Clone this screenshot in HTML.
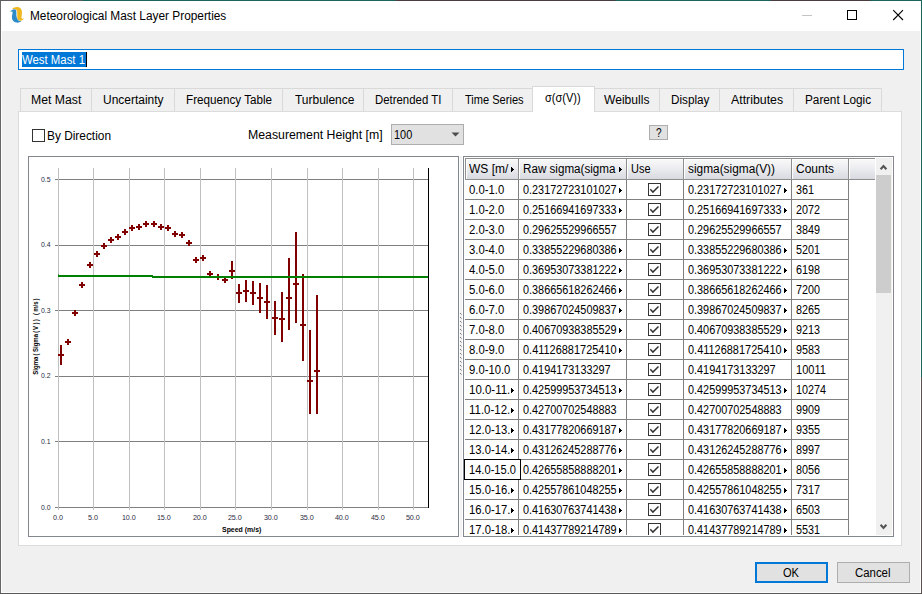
<!DOCTYPE html>
<html><head><meta charset="utf-8"><title>Meteorological Mast Layer Properties</title>
<style>
html,body{margin:0;padding:0;}
body{width:922px;height:594px;overflow:hidden;position:relative;background:#f0f0f0;font-family:"Liberation Sans",sans-serif;font-size:12px;}
div,span,svg{position:absolute;box-sizing:border-box;}
.t{white-space:nowrap;transform-origin:0 50%;}
.tab{top:88px;height:23px;border:1px solid #d9d9d9;border-bottom:none;background:#f0f0f0;}
.hc{top:158px;height:22px;border:1px solid #8e8e8e;border-left:none;background:linear-gradient(#f9f9f9,#ecedf0 45%,#d7dae0);box-shadow:inset 1px 1px 0 #fff;}
.btn{background:#e1e1e1;border:1px solid #adadad;}
.hl{height:1px;background:#808080;}
.vl{width:1px;background:#808080;}
</style></head><body>

<div style="left:0;top:0;width:922px;height:1px;background:linear-gradient(90deg,#5c5c5c 0,#5c5c5c 82px,#1a645e 83px,#1a645e 395px,#4a3d40 396px,#4a3d40 615px,#1a645e 616px,#1a645e 770px,#4a3d40 771px,#4a3d40 870px,#1a645e 871px,#1a645e 100%);"></div>
<div style="left:0;top:1px;width:1px;height:593px;background:#666;"></div>
<div style="left:921px;top:0;width:1px;height:594px;background:linear-gradient(180deg,#1a645e 0,#1a645e 377px,#5e504e 378px,#5e504e 100%);"></div>
<div style="left:0;top:593px;width:922px;height:1px;background:#585858;"></div>
<div style="left:1px;top:1px;width:1px;height:592px;background:#fcfcfc;"></div>
<div style="left:920px;top:1px;width:1px;height:592px;background:#fcfcfc;"></div>
<div style="left:1px;top:592px;width:920px;height:1px;background:#fcfcfc;"></div>
<div style="left:1px;top:1px;width:920px;height:30px;background:#fff;"></div>
<svg style="left:4px;top:2px;width:30px;height:26px;" viewBox="0 0 685 594">
<path d="M185,160 C220,120 290,105 350,125 C400,150 415,200 410,260 C405,310 390,350 405,375 C420,390 440,385 455,368 C452,400 420,432 370,430 C330,425 305,390 300,340 C295,290 310,230 290,190 C270,160 220,160 185,160 Z" fill="#f0b81f"/>
<path d="M132,218 C170,190 200,165 240,165 C275,170 290,200 285,260 C280,320 290,380 330,420 C360,440 390,435 405,430 C380,462 330,478 280,470 C220,460 180,420 180,350 C180,300 200,260 195,228 C190,212 160,218 132,218 Z" fill="#2e8bc9"/>
<path d="M290,200 C300,240 286,290 298,340" stroke="#fff" stroke-width="9" fill="none" opacity="0.75"/>
</svg>
<span class="t" style="left:30.40px;top:7.84px;font-size:12px;line-height:16px;color:#000;transform:scaleX(0.9876);">Meteorological Mast Layer Properties</span>
<div style="left:802px;top:15px;width:10px;height:1px;background:#c4c4c4;"></div>
<div style="left:847px;top:10px;width:10px;height:10px;border:1px solid #000;"></div>
<svg style="left:892px;top:9px;width:13px;height:13px;" viewBox="0 0 13 13"><path d="M1.2,1.2 L11,11 M11,1.2 L1.2,11" stroke="#000" stroke-width="1.1" fill="none"/></svg>
<div style="left:18px;top:49px;width:886px;height:21px;background:#fff;border:1px solid #0078d7;"></div>
<div style="left:22px;top:52px;width:64px;height:15px;background:#0078d7;"></div>
<div style="left:86px;top:52px;width:1px;height:15px;background:#000;"></div>
<span class="t" style="left:22.30px;top:52.44px;font-size:12px;line-height:16px;color:#fff;transform:scaleX(0.9479);">West Mast 1</span>
<div style="left:18px;top:111px;width:884px;height:435px;background:#fff;border:1px solid #dcdcdc;"></div>
<div class="tab" style="left:20px;width:72px;"></div>
<span class="t" style="left:31.30px;top:91.84px;font-size:12px;line-height:16px;color:#000;transform:scaleX(1.0194);">Met Mast</span>
<div class="tab" style="left:91px;width:84px;"></div>
<span class="t" style="left:103.40px;top:91.84px;font-size:12px;line-height:16px;color:#000;transform:scaleX(0.9985);">Uncertainty</span>
<div class="tab" style="left:174px;width:109px;"></div>
<span class="t" style="left:186.30px;top:91.84px;font-size:12px;line-height:16px;color:#000;transform:scaleX(0.9729);">Frequency Table</span>
<div class="tab" style="left:282px;width:82px;"></div>
<span class="t" style="left:294.50px;top:91.84px;font-size:12px;line-height:16px;color:#000;transform:scaleX(0.9968);">Turbulence</span>
<div class="tab" style="left:363px;width:90px;"></div>
<span class="t" style="left:375.30px;top:91.84px;font-size:12px;line-height:16px;color:#000;transform:scaleX(0.9496);">Detrended TI</span>
<div class="tab" style="left:452px;width:83px;"></div>
<span class="t" style="left:464.60px;top:91.84px;font-size:12px;line-height:16px;color:#000;transform:scaleX(0.9218);">Time Series</span>
<div class="tab" style="left:592px;width:68px;"></div>
<span class="t" style="left:604.10px;top:91.84px;font-size:12px;line-height:16px;color:#000;transform:scaleX(1.0082);">Weibulls</span>
<div class="tab" style="left:659px;width:61px;"></div>
<span class="t" style="left:671.20px;top:91.84px;font-size:12px;line-height:16px;color:#000;transform:scaleX(0.9760);">Display</span>
<div class="tab" style="left:719px;width:75px;"></div>
<span class="t" style="left:731.00px;top:91.84px;font-size:12px;line-height:16px;color:#000;transform:scaleX(1.0278);">Attributes</span>
<div class="tab" style="left:793px;width:89px;"></div>
<span class="t" style="left:805.30px;top:91.84px;font-size:12px;line-height:16px;color:#000;transform:scaleX(0.9810);">Parent Logic</span>
<div style="left:532px;top:86px;width:63px;height:26px;border:1px solid #d9d9d9;border-bottom:none;background:#fff;"></div>
<span class="t" style="left:544.90px;top:90.34px;font-size:12px;line-height:16px;color:#000;transform:scaleX(0.9175);">σ(σ(V))</span>
<div style="left:32px;top:129px;width:13px;height:13px;background:#fff;border:1px solid #333;"></div>
<span class="t" style="left:46.70px;top:128.44px;font-size:12px;line-height:16px;color:#000;transform:scaleX(0.9894);">By Direction</span>
<span class="t" style="left:247.70px;top:126.64px;font-size:12px;line-height:16px;color:#000;transform:scaleX(1.0245);">Measurement Height [m]</span>
<div class="btn" style="left:391px;top:124px;width:73px;height:21px;"></div>
<span class="t" style="left:394.40px;top:126.64px;font-size:12px;line-height:16px;color:#000;transform:scaleX(0.9090);">100</span>
<svg style="left:451px;top:132px;width:9px;height:5px;" viewBox="0 0 9 5"><path d="M0.5,0.5 L8.5,0.5 L4.5,4.5 Z" fill="#4d4d4d"/></svg>
<div class="btn" style="left:649px;top:125px;width:19px;height:15px;"></div>
<span class="t" style="left:655.80px;top:124.84px;font-size:12px;line-height:16px;color:#000;transform:scaleX(0.8391);">?</span><div style="left:28px;top:156px;width:431px;height:381px;background:#fff;border:1px solid #828790;"></div>
<div style="left:460px;top:156px;width:2px;height:381px;background:#f3f3f3;"></div>
<svg style="left:460px;top:313px;width:2px;height:64px;" viewBox="0 0 2 64" shape-rendering="crispEdges"><rect x="0" y="0" width="1" height="1" fill="#777"/><rect x="1" y="1" width="1" height="1" fill="#aaa"/><rect x="0" y="4" width="1" height="1" fill="#777"/><rect x="1" y="5" width="1" height="1" fill="#aaa"/><rect x="0" y="8" width="1" height="1" fill="#777"/><rect x="1" y="9" width="1" height="1" fill="#aaa"/><rect x="0" y="12" width="1" height="1" fill="#777"/><rect x="1" y="13" width="1" height="1" fill="#aaa"/><rect x="0" y="16" width="1" height="1" fill="#777"/><rect x="1" y="17" width="1" height="1" fill="#aaa"/><rect x="0" y="20" width="1" height="1" fill="#777"/><rect x="1" y="21" width="1" height="1" fill="#aaa"/><rect x="0" y="24" width="1" height="1" fill="#777"/><rect x="1" y="25" width="1" height="1" fill="#aaa"/><rect x="0" y="28" width="1" height="1" fill="#777"/><rect x="1" y="29" width="1" height="1" fill="#aaa"/><rect x="0" y="32" width="1" height="1" fill="#777"/><rect x="1" y="33" width="1" height="1" fill="#aaa"/><rect x="0" y="36" width="1" height="1" fill="#777"/><rect x="1" y="37" width="1" height="1" fill="#aaa"/><rect x="0" y="40" width="1" height="1" fill="#777"/><rect x="1" y="41" width="1" height="1" fill="#aaa"/><rect x="0" y="44" width="1" height="1" fill="#777"/><rect x="1" y="45" width="1" height="1" fill="#aaa"/><rect x="0" y="48" width="1" height="1" fill="#777"/><rect x="1" y="49" width="1" height="1" fill="#aaa"/><rect x="0" y="52" width="1" height="1" fill="#777"/><rect x="1" y="53" width="1" height="1" fill="#aaa"/><rect x="0" y="56" width="1" height="1" fill="#777"/><rect x="1" y="57" width="1" height="1" fill="#aaa"/><rect x="0" y="60" width="1" height="1" fill="#777"/><rect x="1" y="61" width="1" height="1" fill="#aaa"/></svg>
<svg style="left:0;top:0;width:470px;height:540px;" viewBox="0 0 470 540">
<g shape-rendering="crispEdges">
<rect x="55" y="507" width="374" height="1" fill="#7f7f7f"/>
<rect x="55" y="441" width="374" height="1" fill="#7f7f7f"/>
<rect x="55" y="376" width="374" height="1" fill="#7f7f7f"/>
<rect x="55" y="310" width="374" height="1" fill="#7f7f7f"/>
<rect x="55" y="245" width="374" height="1" fill="#7f7f7f"/>
<rect x="55" y="179" width="374" height="1" fill="#7f7f7f"/>
<rect x="58" y="168" width="1" height="342" fill="#c0c0c0"/>
<rect x="93" y="168" width="1" height="342" fill="#c0c0c0"/>
<rect x="129" y="168" width="1" height="342" fill="#c0c0c0"/>
<rect x="164" y="168" width="1" height="342" fill="#c0c0c0"/>
<rect x="200" y="168" width="1" height="342" fill="#c0c0c0"/>
<rect x="235" y="168" width="1" height="342" fill="#c0c0c0"/>
<rect x="271" y="168" width="1" height="342" fill="#c0c0c0"/>
<rect x="307" y="168" width="1" height="342" fill="#c0c0c0"/>
<rect x="342" y="168" width="1" height="342" fill="#c0c0c0"/>
<rect x="378" y="168" width="1" height="342" fill="#c0c0c0"/>
<rect x="413" y="168" width="1" height="342" fill="#c0c0c0"/>
<rect x="428" y="168" width="1" height="340" fill="#000"/>
</g>
<g shape-rendering="crispEdges">
<rect x="60" y="345" width="2" height="20" fill="#800000"/>
<rect x="58" y="354" width="6" height="2" fill="#800000"/>
<rect x="67" y="339" width="2" height="6" fill="#800000"/>
<rect x="65" y="341" width="6" height="2" fill="#800000"/>
<rect x="74" y="310" width="2" height="6" fill="#800000"/>
<rect x="72" y="312" width="6" height="2" fill="#800000"/>
<rect x="81" y="282" width="2" height="6" fill="#800000"/>
<rect x="79" y="284" width="6" height="2" fill="#800000"/>
<rect x="89" y="262" width="2" height="6" fill="#800000"/>
<rect x="87" y="264" width="6" height="2" fill="#800000"/>
<rect x="96" y="251" width="2" height="6" fill="#800000"/>
<rect x="94" y="253" width="6" height="2" fill="#800000"/>
<rect x="103" y="243" width="2" height="6" fill="#800000"/>
<rect x="101" y="245" width="6" height="2" fill="#800000"/>
<rect x="110" y="237" width="2" height="6" fill="#800000"/>
<rect x="108" y="239" width="6" height="2" fill="#800000"/>
<rect x="117" y="234" width="2" height="6" fill="#800000"/>
<rect x="115" y="236" width="6" height="2" fill="#800000"/>
<rect x="124" y="229" width="2" height="6" fill="#800000"/>
<rect x="122" y="231" width="6" height="2" fill="#800000"/>
<rect x="131" y="225" width="2" height="6" fill="#800000"/>
<rect x="129" y="227" width="6" height="2" fill="#800000"/>
<rect x="138" y="224" width="2" height="6" fill="#800000"/>
<rect x="136" y="226" width="6" height="2" fill="#800000"/>
<rect x="145" y="221" width="2" height="6" fill="#800000"/>
<rect x="143" y="223" width="6" height="2" fill="#800000"/>
<rect x="153" y="221" width="2" height="6" fill="#800000"/>
<rect x="151" y="223" width="6" height="2" fill="#800000"/>
<rect x="160" y="224" width="2" height="6" fill="#800000"/>
<rect x="158" y="226" width="6" height="2" fill="#800000"/>
<rect x="167" y="225" width="2" height="6" fill="#800000"/>
<rect x="165" y="227" width="6" height="2" fill="#800000"/>
<rect x="174" y="231" width="2" height="6" fill="#800000"/>
<rect x="172" y="233" width="6" height="2" fill="#800000"/>
<rect x="181" y="232" width="2" height="6" fill="#800000"/>
<rect x="179" y="234" width="6" height="2" fill="#800000"/>
<rect x="188" y="240" width="2" height="6" fill="#800000"/>
<rect x="186" y="242" width="6" height="2" fill="#800000"/>
<rect x="195" y="257" width="2" height="6" fill="#800000"/>
<rect x="193" y="259" width="6" height="2" fill="#800000"/>
<rect x="202" y="255" width="2" height="6" fill="#800000"/>
<rect x="200" y="257" width="6" height="2" fill="#800000"/>
<rect x="209" y="271" width="2" height="6" fill="#800000"/>
<rect x="207" y="273" width="6" height="2" fill="#800000"/>
<rect x="217" y="274" width="2" height="6" fill="#800000"/>
<rect x="215" y="276" width="6" height="2" fill="#800000"/>
<rect x="224" y="277" width="2" height="6" fill="#800000"/>
<rect x="222" y="279" width="6" height="2" fill="#800000"/>
<rect x="231" y="261" width="2" height="18" fill="#800000"/>
<rect x="229" y="270" width="6" height="2" fill="#800000"/>
<rect x="238" y="284" width="2" height="19" fill="#800000"/>
<rect x="236" y="292" width="6" height="2" fill="#800000"/>
<rect x="245" y="280" width="2" height="22" fill="#800000"/>
<rect x="243" y="290" width="6" height="2" fill="#800000"/>
<rect x="252" y="281" width="2" height="24" fill="#800000"/>
<rect x="250" y="292" width="6" height="2" fill="#800000"/>
<rect x="259" y="283" width="2" height="30" fill="#800000"/>
<rect x="257" y="297" width="6" height="2" fill="#800000"/>
<rect x="266" y="285" width="2" height="34" fill="#800000"/>
<rect x="264" y="301" width="6" height="2" fill="#800000"/>
<rect x="274" y="301" width="2" height="34" fill="#800000"/>
<rect x="272" y="317" width="6" height="2" fill="#800000"/>
<rect x="281" y="292" width="2" height="50" fill="#800000"/>
<rect x="279" y="318" width="6" height="2" fill="#800000"/>
<rect x="288" y="258" width="2" height="72" fill="#800000"/>
<rect x="286" y="297" width="6" height="2" fill="#800000"/>
<rect x="295" y="232" width="2" height="91" fill="#800000"/>
<rect x="293" y="283" width="6" height="2" fill="#800000"/>
<rect x="302" y="274" width="2" height="87" fill="#800000"/>
<rect x="300" y="324" width="6" height="2" fill="#800000"/>
<rect x="309" y="330" width="2" height="84" fill="#800000"/>
<rect x="307" y="380" width="6" height="2" fill="#800000"/>
<rect x="316" y="295" width="2" height="119" fill="#800000"/>
<rect x="314" y="370" width="6" height="2" fill="#800000"/>
</g>
<g shape-rendering="crispEdges"><rect x="58" y="275" width="95" height="2" fill="#008000"/><rect x="152" y="276" width="276" height="2" fill="#008000"/><rect x="58" y="274" width="1" height="1" fill="#008000" opacity="0.6"/></g>
</svg>
<span class="t" style="left:40.80px;top:499.51px;font-size:7.2px;line-height:16px;color:#2a2a40;transform:scaleX(0.9591);">0.0</span>
<span class="t" style="left:40.80px;top:433.91px;font-size:7.2px;line-height:16px;color:#2a2a40;transform:scaleX(0.9591);">0.1</span>
<span class="t" style="left:40.80px;top:368.31px;font-size:7.2px;line-height:16px;color:#2a2a40;transform:scaleX(0.9591);">0.2</span>
<span class="t" style="left:40.80px;top:302.71px;font-size:7.2px;line-height:16px;color:#2a2a40;transform:scaleX(0.9591);">0.3</span>
<span class="t" style="left:40.80px;top:237.11px;font-size:7.2px;line-height:16px;color:#2a2a40;transform:scaleX(0.9591);">0.4</span>
<span class="t" style="left:40.80px;top:171.51px;font-size:7.2px;line-height:16px;color:#2a2a40;transform:scaleX(0.9591);">0.5</span>
<span class="t" style="left:52.90px;top:509.81px;font-size:7.2px;line-height:16px;color:#2a2a40;">0.0</span>
<span class="t" style="left:87.90px;top:509.81px;font-size:7.2px;line-height:16px;color:#2a2a40;">5.0</span>
<span class="t" style="left:121.89px;top:509.81px;font-size:7.2px;line-height:16px;color:#2a2a40;">10.0</span>
<span class="t" style="left:156.89px;top:509.81px;font-size:7.2px;line-height:16px;color:#2a2a40;">15.0</span>
<span class="t" style="left:192.89px;top:509.81px;font-size:7.2px;line-height:16px;color:#2a2a40;">20.0</span>
<span class="t" style="left:227.89px;top:509.81px;font-size:7.2px;line-height:16px;color:#2a2a40;">25.0</span>
<span class="t" style="left:263.89px;top:509.81px;font-size:7.2px;line-height:16px;color:#2a2a40;">30.0</span>
<span class="t" style="left:299.89px;top:509.81px;font-size:7.2px;line-height:16px;color:#2a2a40;">35.0</span>
<span class="t" style="left:334.89px;top:509.81px;font-size:7.2px;line-height:16px;color:#2a2a40;">40.0</span>
<span class="t" style="left:370.89px;top:509.81px;font-size:7.2px;line-height:16px;color:#2a2a40;">45.0</span>
<span class="t" style="left:405.89px;top:509.81px;font-size:7.2px;line-height:16px;color:#2a2a40;">50.0</span>
<span class="t" style="left:222.40px;top:521.91px;font-size:7.2px;line-height:16px;color:#000;font-weight:bold;transform:scaleX(0.9655);">Speed (m/s)</span>
<span class="t" style="left:0;top:0;font-size:6.9px;line-height:8px;height:8px;font-weight:bold;color:#000;transform-origin:0 0;transform:translate(32.0px,374.7px) rotate(-90deg) scale(0.87,1);"><span style="position:static;display:inline-block;margin:0 0px 0 0px;">Sigma</span><span style="position:static;display:inline-block;margin:0 1.6px 0 1.5px;">(</span><span style="position:static;display:inline-block;margin:0 0px 0 0px;">Sigma</span><span style="position:static;display:inline-block;margin:0 0.8px 0 1.6px;">(</span><span style="position:static;display:inline-block;margin:0 0px 0 0px;">V</span><span style="position:static;display:inline-block;margin:0 0px 0 1.6px;">)</span><span style="position:static;display:inline-block;margin:0 0px 0 1.6px;">)</span><span style="position:static;display:inline-block;margin:0 1.3px 0 4.8px;">(</span><span style="position:static;display:inline-block;margin:0 0px 0 0px;">m/s</span><span style="position:static;display:inline-block;margin:0 0px 0 1.3px;">)</span></span><div style="left:463px;top:156px;width:431px;height:381px;background:#fff;border:1px solid #828790;"></div>
<div class="hc" style="left:465px;width:54px;border-left:1px solid #8e8e8e;"></div>
<div class="hc" style="left:519px;width:108px;"></div>
<div class="hc" style="left:627px;width:57px;"></div>
<div class="hc" style="left:684px;width:108px;"></div>
<div class="hc" style="left:792px;width:57px;"></div>
<div class="hc" style="left:849px;width:26px;border-right:none;"></div>
<span class="t" style="left:468.90px;top:160.84px;font-size:12px;line-height:16px;color:#000;transform:scaleX(0.9993);">WS [m/</span>
<svg style="left:511px;top:167px;width:3px;height:5px;" viewBox="0 0 3 5" shape-rendering="crispEdges"><rect x="0" y="0" width="1" height="5" fill="#000"/><rect x="1" y="1" width="1" height="3" fill="#000"/><rect x="2" y="2" width="1" height="1" fill="#000"/></svg>
<span class="t" style="left:522.60px;top:160.84px;font-size:12px;line-height:16px;color:#000;transform:scaleX(0.9700);">Raw sigma(sigma</span>
<svg style="left:619px;top:167px;width:3px;height:5px;" viewBox="0 0 3 5" shape-rendering="crispEdges"><rect x="0" y="0" width="1" height="5" fill="#000"/><rect x="1" y="1" width="1" height="3" fill="#000"/><rect x="2" y="2" width="1" height="1" fill="#000"/></svg>
<span class="t" style="left:630.60px;top:160.84px;font-size:12px;line-height:16px;color:#000;transform:scaleX(0.9138);">Use</span>
<span class="t" style="left:688.20px;top:160.84px;font-size:12px;line-height:16px;color:#000;transform:scaleX(0.9885);">sigma(sigma(V))</span>
<span class="t" style="left:795.50px;top:160.84px;font-size:12px;line-height:16px;color:#000;transform:scaleX(0.9994);">Counts</span>
<div style="left:464px;top:180px;width:412px;height:355px;overflow:hidden;">
<div class="vl" style="left:54px;top:0;height:360px;"></div>
<div class="vl" style="left:162px;top:0;height:360px;"></div>
<div class="vl" style="left:219px;top:0;height:360px;"></div>
<div class="vl" style="left:327px;top:0;height:360px;"></div>
<div class="vl" style="left:384px;top:0;height:360px;"></div>
<div class="hl" style="left:1px;top:19px;width:384px;"></div>
<span class="t" style="left:4.50px;top:1.84px;font-size:12px;line-height:16px;color:#000;transform:scaleX(0.9449);">0.0-1.0</span>
<span class="t" style="left:59.40px;top:1.84px;font-size:12px;line-height:16px;color:#000;transform:scaleX(0.9049);">0.23172723101027</span>
<svg style="left:155px;top:8px;width:3px;height:5px;" viewBox="0 0 3 5" shape-rendering="crispEdges"><rect x="0" y="0" width="1" height="5" fill="#000"/><rect x="1" y="1" width="1" height="3" fill="#000"/><rect x="2" y="2" width="1" height="1" fill="#000"/></svg>
<span class="t" style="left:224.40px;top:1.84px;font-size:12px;line-height:16px;color:#000;transform:scaleX(0.9049);">0.23172723101027</span>
<svg style="left:320px;top:8px;width:3px;height:5px;" viewBox="0 0 3 5" shape-rendering="crispEdges"><rect x="0" y="0" width="1" height="5" fill="#000"/><rect x="1" y="1" width="1" height="3" fill="#000"/><rect x="2" y="2" width="1" height="1" fill="#000"/></svg>
<span class="t" style="left:331.50px;top:1.84px;font-size:12px;line-height:16px;color:#000;transform:scaleX(0.8990);">361</span>
<div style="left:184px;top:3px;width:13px;height:13px;border:1px solid #333;background:#fff;"></div>
<svg style="left:184px;top:3px;width:13px;height:13px;" viewBox="0 0 13 13"><path d="M2.3,6.3 L4.9,9.1 L10.5,3.5" stroke="#333" stroke-width="1.45" fill="none"/></svg>
<div class="hl" style="left:1px;top:39px;width:384px;"></div>
<span class="t" style="left:4.50px;top:21.84px;font-size:12px;line-height:16px;color:#000;transform:scaleX(0.9449);">1.0-2.0</span>
<span class="t" style="left:59.40px;top:21.84px;font-size:12px;line-height:16px;color:#000;transform:scaleX(0.9049);">0.25166941697333</span>
<svg style="left:155px;top:28px;width:3px;height:5px;" viewBox="0 0 3 5" shape-rendering="crispEdges"><rect x="0" y="0" width="1" height="5" fill="#000"/><rect x="1" y="1" width="1" height="3" fill="#000"/><rect x="2" y="2" width="1" height="1" fill="#000"/></svg>
<span class="t" style="left:224.40px;top:21.84px;font-size:12px;line-height:16px;color:#000;transform:scaleX(0.9049);">0.25166941697333</span>
<svg style="left:320px;top:28px;width:3px;height:5px;" viewBox="0 0 3 5" shape-rendering="crispEdges"><rect x="0" y="0" width="1" height="5" fill="#000"/><rect x="1" y="1" width="1" height="3" fill="#000"/><rect x="2" y="2" width="1" height="1" fill="#000"/></svg>
<span class="t" style="left:331.50px;top:21.84px;font-size:12px;line-height:16px;color:#000;transform:scaleX(0.8990);">2072</span>
<div style="left:184px;top:23px;width:13px;height:13px;border:1px solid #333;background:#fff;"></div>
<svg style="left:184px;top:23px;width:13px;height:13px;" viewBox="0 0 13 13"><path d="M2.3,6.3 L4.9,9.1 L10.5,3.5" stroke="#333" stroke-width="1.45" fill="none"/></svg>
<div class="hl" style="left:1px;top:59px;width:384px;"></div>
<span class="t" style="left:4.50px;top:41.84px;font-size:12px;line-height:16px;color:#000;transform:scaleX(0.9449);">2.0-3.0</span>
<span class="t" style="left:59.40px;top:41.84px;font-size:12px;line-height:16px;color:#000;transform:scaleX(0.9049);">0.29625529966557</span>
<span class="t" style="left:224.40px;top:41.84px;font-size:12px;line-height:16px;color:#000;transform:scaleX(0.9049);">0.29625529966557</span>
<span class="t" style="left:331.50px;top:41.84px;font-size:12px;line-height:16px;color:#000;transform:scaleX(0.8990);">3849</span>
<div style="left:184px;top:43px;width:13px;height:13px;border:1px solid #333;background:#fff;"></div>
<svg style="left:184px;top:43px;width:13px;height:13px;" viewBox="0 0 13 13"><path d="M2.3,6.3 L4.9,9.1 L10.5,3.5" stroke="#333" stroke-width="1.45" fill="none"/></svg>
<div class="hl" style="left:1px;top:79px;width:384px;"></div>
<span class="t" style="left:4.50px;top:61.84px;font-size:12px;line-height:16px;color:#000;transform:scaleX(0.9449);">3.0-4.0</span>
<span class="t" style="left:59.40px;top:61.84px;font-size:12px;line-height:16px;color:#000;transform:scaleX(0.9049);">0.33855229680386</span>
<svg style="left:155px;top:68px;width:3px;height:5px;" viewBox="0 0 3 5" shape-rendering="crispEdges"><rect x="0" y="0" width="1" height="5" fill="#000"/><rect x="1" y="1" width="1" height="3" fill="#000"/><rect x="2" y="2" width="1" height="1" fill="#000"/></svg>
<span class="t" style="left:224.40px;top:61.84px;font-size:12px;line-height:16px;color:#000;transform:scaleX(0.9049);">0.33855229680386</span>
<svg style="left:320px;top:68px;width:3px;height:5px;" viewBox="0 0 3 5" shape-rendering="crispEdges"><rect x="0" y="0" width="1" height="5" fill="#000"/><rect x="1" y="1" width="1" height="3" fill="#000"/><rect x="2" y="2" width="1" height="1" fill="#000"/></svg>
<span class="t" style="left:331.50px;top:61.84px;font-size:12px;line-height:16px;color:#000;transform:scaleX(0.8990);">5201</span>
<div style="left:184px;top:63px;width:13px;height:13px;border:1px solid #333;background:#fff;"></div>
<svg style="left:184px;top:63px;width:13px;height:13px;" viewBox="0 0 13 13"><path d="M2.3,6.3 L4.9,9.1 L10.5,3.5" stroke="#333" stroke-width="1.45" fill="none"/></svg>
<div class="hl" style="left:1px;top:99px;width:384px;"></div>
<span class="t" style="left:4.50px;top:81.84px;font-size:12px;line-height:16px;color:#000;transform:scaleX(0.9449);">4.0-5.0</span>
<span class="t" style="left:59.40px;top:81.84px;font-size:12px;line-height:16px;color:#000;transform:scaleX(0.9049);">0.36953073381222</span>
<svg style="left:155px;top:88px;width:3px;height:5px;" viewBox="0 0 3 5" shape-rendering="crispEdges"><rect x="0" y="0" width="1" height="5" fill="#000"/><rect x="1" y="1" width="1" height="3" fill="#000"/><rect x="2" y="2" width="1" height="1" fill="#000"/></svg>
<span class="t" style="left:224.40px;top:81.84px;font-size:12px;line-height:16px;color:#000;transform:scaleX(0.9049);">0.36953073381222</span>
<svg style="left:320px;top:88px;width:3px;height:5px;" viewBox="0 0 3 5" shape-rendering="crispEdges"><rect x="0" y="0" width="1" height="5" fill="#000"/><rect x="1" y="1" width="1" height="3" fill="#000"/><rect x="2" y="2" width="1" height="1" fill="#000"/></svg>
<span class="t" style="left:331.50px;top:81.84px;font-size:12px;line-height:16px;color:#000;transform:scaleX(0.8990);">6198</span>
<div style="left:184px;top:83px;width:13px;height:13px;border:1px solid #333;background:#fff;"></div>
<svg style="left:184px;top:83px;width:13px;height:13px;" viewBox="0 0 13 13"><path d="M2.3,6.3 L4.9,9.1 L10.5,3.5" stroke="#333" stroke-width="1.45" fill="none"/></svg>
<div class="hl" style="left:1px;top:119px;width:384px;"></div>
<span class="t" style="left:4.50px;top:101.84px;font-size:12px;line-height:16px;color:#000;transform:scaleX(0.9449);">5.0-6.0</span>
<span class="t" style="left:59.40px;top:101.84px;font-size:12px;line-height:16px;color:#000;transform:scaleX(0.9049);">0.38665618262466</span>
<svg style="left:155px;top:108px;width:3px;height:5px;" viewBox="0 0 3 5" shape-rendering="crispEdges"><rect x="0" y="0" width="1" height="5" fill="#000"/><rect x="1" y="1" width="1" height="3" fill="#000"/><rect x="2" y="2" width="1" height="1" fill="#000"/></svg>
<span class="t" style="left:224.40px;top:101.84px;font-size:12px;line-height:16px;color:#000;transform:scaleX(0.9049);">0.38665618262466</span>
<svg style="left:320px;top:108px;width:3px;height:5px;" viewBox="0 0 3 5" shape-rendering="crispEdges"><rect x="0" y="0" width="1" height="5" fill="#000"/><rect x="1" y="1" width="1" height="3" fill="#000"/><rect x="2" y="2" width="1" height="1" fill="#000"/></svg>
<span class="t" style="left:331.50px;top:101.84px;font-size:12px;line-height:16px;color:#000;transform:scaleX(0.8990);">7200</span>
<div style="left:184px;top:103px;width:13px;height:13px;border:1px solid #333;background:#fff;"></div>
<svg style="left:184px;top:103px;width:13px;height:13px;" viewBox="0 0 13 13"><path d="M2.3,6.3 L4.9,9.1 L10.5,3.5" stroke="#333" stroke-width="1.45" fill="none"/></svg>
<div class="hl" style="left:1px;top:139px;width:384px;"></div>
<span class="t" style="left:4.50px;top:121.84px;font-size:12px;line-height:16px;color:#000;transform:scaleX(0.9449);">6.0-7.0</span>
<span class="t" style="left:59.40px;top:121.84px;font-size:12px;line-height:16px;color:#000;transform:scaleX(0.9049);">0.39867024509837</span>
<svg style="left:155px;top:128px;width:3px;height:5px;" viewBox="0 0 3 5" shape-rendering="crispEdges"><rect x="0" y="0" width="1" height="5" fill="#000"/><rect x="1" y="1" width="1" height="3" fill="#000"/><rect x="2" y="2" width="1" height="1" fill="#000"/></svg>
<span class="t" style="left:224.40px;top:121.84px;font-size:12px;line-height:16px;color:#000;transform:scaleX(0.9049);">0.39867024509837</span>
<svg style="left:320px;top:128px;width:3px;height:5px;" viewBox="0 0 3 5" shape-rendering="crispEdges"><rect x="0" y="0" width="1" height="5" fill="#000"/><rect x="1" y="1" width="1" height="3" fill="#000"/><rect x="2" y="2" width="1" height="1" fill="#000"/></svg>
<span class="t" style="left:331.50px;top:121.84px;font-size:12px;line-height:16px;color:#000;transform:scaleX(0.8990);">8265</span>
<div style="left:184px;top:123px;width:13px;height:13px;border:1px solid #333;background:#fff;"></div>
<svg style="left:184px;top:123px;width:13px;height:13px;" viewBox="0 0 13 13"><path d="M2.3,6.3 L4.9,9.1 L10.5,3.5" stroke="#333" stroke-width="1.45" fill="none"/></svg>
<div class="hl" style="left:1px;top:159px;width:384px;"></div>
<span class="t" style="left:4.50px;top:141.84px;font-size:12px;line-height:16px;color:#000;transform:scaleX(0.9449);">7.0-8.0</span>
<span class="t" style="left:59.40px;top:141.84px;font-size:12px;line-height:16px;color:#000;transform:scaleX(0.9049);">0.40670938385529</span>
<svg style="left:155px;top:148px;width:3px;height:5px;" viewBox="0 0 3 5" shape-rendering="crispEdges"><rect x="0" y="0" width="1" height="5" fill="#000"/><rect x="1" y="1" width="1" height="3" fill="#000"/><rect x="2" y="2" width="1" height="1" fill="#000"/></svg>
<span class="t" style="left:224.40px;top:141.84px;font-size:12px;line-height:16px;color:#000;transform:scaleX(0.9049);">0.40670938385529</span>
<svg style="left:320px;top:148px;width:3px;height:5px;" viewBox="0 0 3 5" shape-rendering="crispEdges"><rect x="0" y="0" width="1" height="5" fill="#000"/><rect x="1" y="1" width="1" height="3" fill="#000"/><rect x="2" y="2" width="1" height="1" fill="#000"/></svg>
<span class="t" style="left:331.50px;top:141.84px;font-size:12px;line-height:16px;color:#000;transform:scaleX(0.8990);">9213</span>
<div style="left:184px;top:143px;width:13px;height:13px;border:1px solid #333;background:#fff;"></div>
<svg style="left:184px;top:143px;width:13px;height:13px;" viewBox="0 0 13 13"><path d="M2.3,6.3 L4.9,9.1 L10.5,3.5" stroke="#333" stroke-width="1.45" fill="none"/></svg>
<div class="hl" style="left:1px;top:179px;width:384px;"></div>
<span class="t" style="left:4.50px;top:161.84px;font-size:12px;line-height:16px;color:#000;transform:scaleX(0.9449);">8.0-9.0</span>
<span class="t" style="left:59.40px;top:161.84px;font-size:12px;line-height:16px;color:#000;transform:scaleX(0.9127);">0.41126881725410</span>
<svg style="left:155px;top:168px;width:3px;height:5px;" viewBox="0 0 3 5" shape-rendering="crispEdges"><rect x="0" y="0" width="1" height="5" fill="#000"/><rect x="1" y="1" width="1" height="3" fill="#000"/><rect x="2" y="2" width="1" height="1" fill="#000"/></svg>
<span class="t" style="left:224.40px;top:161.84px;font-size:12px;line-height:16px;color:#000;transform:scaleX(0.9127);">0.41126881725410</span>
<svg style="left:320px;top:168px;width:3px;height:5px;" viewBox="0 0 3 5" shape-rendering="crispEdges"><rect x="0" y="0" width="1" height="5" fill="#000"/><rect x="1" y="1" width="1" height="3" fill="#000"/><rect x="2" y="2" width="1" height="1" fill="#000"/></svg>
<span class="t" style="left:331.50px;top:161.84px;font-size:12px;line-height:16px;color:#000;transform:scaleX(0.8990);">9583</span>
<div style="left:184px;top:163px;width:13px;height:13px;border:1px solid #333;background:#fff;"></div>
<svg style="left:184px;top:163px;width:13px;height:13px;" viewBox="0 0 13 13"><path d="M2.3,6.3 L4.9,9.1 L10.5,3.5" stroke="#333" stroke-width="1.45" fill="none"/></svg>
<div class="hl" style="left:1px;top:199px;width:384px;"></div>
<span class="t" style="left:4.50px;top:181.84px;font-size:12px;line-height:16px;color:#000;transform:scaleX(0.9379);">9.0-10.0</span>
<span class="t" style="left:59.40px;top:181.84px;font-size:12px;line-height:16px;color:#000;transform:scaleX(0.9053);">0.4194173133297</span>
<span class="t" style="left:224.40px;top:181.84px;font-size:12px;line-height:16px;color:#000;transform:scaleX(0.9053);">0.4194173133297</span>
<span class="t" style="left:331.50px;top:181.84px;font-size:12px;line-height:16px;color:#000;transform:scaleX(0.9237);">10011</span>
<div style="left:184px;top:183px;width:13px;height:13px;border:1px solid #333;background:#fff;"></div>
<svg style="left:184px;top:183px;width:13px;height:13px;" viewBox="0 0 13 13"><path d="M2.3,6.3 L4.9,9.1 L10.5,3.5" stroke="#333" stroke-width="1.45" fill="none"/></svg>
<div class="hl" style="left:1px;top:219px;width:384px;"></div>
<span class="t" style="left:4.50px;top:201.84px;font-size:12px;line-height:16px;color:#000;transform:scaleX(0.9573);">10.0-11.</span>
<svg style="left:47px;top:208px;width:3px;height:5px;" viewBox="0 0 3 5" shape-rendering="crispEdges"><rect x="0" y="0" width="1" height="5" fill="#000"/><rect x="1" y="1" width="1" height="3" fill="#000"/><rect x="2" y="2" width="1" height="1" fill="#000"/></svg>
<span class="t" style="left:59.40px;top:201.84px;font-size:12px;line-height:16px;color:#000;transform:scaleX(0.9049);">0.42599953734513</span>
<svg style="left:155px;top:208px;width:3px;height:5px;" viewBox="0 0 3 5" shape-rendering="crispEdges"><rect x="0" y="0" width="1" height="5" fill="#000"/><rect x="1" y="1" width="1" height="3" fill="#000"/><rect x="2" y="2" width="1" height="1" fill="#000"/></svg>
<span class="t" style="left:224.40px;top:201.84px;font-size:12px;line-height:16px;color:#000;transform:scaleX(0.9049);">0.42599953734513</span>
<svg style="left:320px;top:208px;width:3px;height:5px;" viewBox="0 0 3 5" shape-rendering="crispEdges"><rect x="0" y="0" width="1" height="5" fill="#000"/><rect x="1" y="1" width="1" height="3" fill="#000"/><rect x="2" y="2" width="1" height="1" fill="#000"/></svg>
<span class="t" style="left:331.50px;top:201.84px;font-size:12px;line-height:16px;color:#000;transform:scaleX(0.8990);">10274</span>
<div style="left:184px;top:203px;width:13px;height:13px;border:1px solid #333;background:#fff;"></div>
<svg style="left:184px;top:203px;width:13px;height:13px;" viewBox="0 0 13 13"><path d="M2.3,6.3 L4.9,9.1 L10.5,3.5" stroke="#333" stroke-width="1.45" fill="none"/></svg>
<div class="hl" style="left:1px;top:239px;width:384px;"></div>
<span class="t" style="left:4.50px;top:221.84px;font-size:12px;line-height:16px;color:#000;transform:scaleX(0.9573);">11.0-12.</span>
<svg style="left:47px;top:228px;width:3px;height:5px;" viewBox="0 0 3 5" shape-rendering="crispEdges"><rect x="0" y="0" width="1" height="5" fill="#000"/><rect x="1" y="1" width="1" height="3" fill="#000"/><rect x="2" y="2" width="1" height="1" fill="#000"/></svg>
<span class="t" style="left:59.40px;top:221.84px;font-size:12px;line-height:16px;color:#000;transform:scaleX(0.9049);">0.42700702548883</span>
<span class="t" style="left:224.40px;top:221.84px;font-size:12px;line-height:16px;color:#000;transform:scaleX(0.9049);">0.42700702548883</span>
<span class="t" style="left:331.50px;top:221.84px;font-size:12px;line-height:16px;color:#000;transform:scaleX(0.8990);">9909</span>
<div style="left:184px;top:223px;width:13px;height:13px;border:1px solid #333;background:#fff;"></div>
<svg style="left:184px;top:223px;width:13px;height:13px;" viewBox="0 0 13 13"><path d="M2.3,6.3 L4.9,9.1 L10.5,3.5" stroke="#333" stroke-width="1.45" fill="none"/></svg>
<div class="hl" style="left:1px;top:259px;width:384px;"></div>
<span class="t" style="left:4.50px;top:241.84px;font-size:12px;line-height:16px;color:#000;transform:scaleX(0.9379);">12.0-13.</span>
<svg style="left:47px;top:248px;width:3px;height:5px;" viewBox="0 0 3 5" shape-rendering="crispEdges"><rect x="0" y="0" width="1" height="5" fill="#000"/><rect x="1" y="1" width="1" height="3" fill="#000"/><rect x="2" y="2" width="1" height="1" fill="#000"/></svg>
<span class="t" style="left:59.40px;top:241.84px;font-size:12px;line-height:16px;color:#000;transform:scaleX(0.9049);">0.43177820669187</span>
<svg style="left:155px;top:248px;width:3px;height:5px;" viewBox="0 0 3 5" shape-rendering="crispEdges"><rect x="0" y="0" width="1" height="5" fill="#000"/><rect x="1" y="1" width="1" height="3" fill="#000"/><rect x="2" y="2" width="1" height="1" fill="#000"/></svg>
<span class="t" style="left:224.40px;top:241.84px;font-size:12px;line-height:16px;color:#000;transform:scaleX(0.9049);">0.43177820669187</span>
<svg style="left:320px;top:248px;width:3px;height:5px;" viewBox="0 0 3 5" shape-rendering="crispEdges"><rect x="0" y="0" width="1" height="5" fill="#000"/><rect x="1" y="1" width="1" height="3" fill="#000"/><rect x="2" y="2" width="1" height="1" fill="#000"/></svg>
<span class="t" style="left:331.50px;top:241.84px;font-size:12px;line-height:16px;color:#000;transform:scaleX(0.8990);">9355</span>
<div style="left:184px;top:243px;width:13px;height:13px;border:1px solid #333;background:#fff;"></div>
<svg style="left:184px;top:243px;width:13px;height:13px;" viewBox="0 0 13 13"><path d="M2.3,6.3 L4.9,9.1 L10.5,3.5" stroke="#333" stroke-width="1.45" fill="none"/></svg>
<div class="hl" style="left:1px;top:279px;width:384px;"></div>
<span class="t" style="left:4.50px;top:261.84px;font-size:12px;line-height:16px;color:#000;transform:scaleX(0.9379);">13.0-14.</span>
<svg style="left:47px;top:268px;width:3px;height:5px;" viewBox="0 0 3 5" shape-rendering="crispEdges"><rect x="0" y="0" width="1" height="5" fill="#000"/><rect x="1" y="1" width="1" height="3" fill="#000"/><rect x="2" y="2" width="1" height="1" fill="#000"/></svg>
<span class="t" style="left:59.40px;top:261.84px;font-size:12px;line-height:16px;color:#000;transform:scaleX(0.9049);">0.43126245288776</span>
<svg style="left:155px;top:268px;width:3px;height:5px;" viewBox="0 0 3 5" shape-rendering="crispEdges"><rect x="0" y="0" width="1" height="5" fill="#000"/><rect x="1" y="1" width="1" height="3" fill="#000"/><rect x="2" y="2" width="1" height="1" fill="#000"/></svg>
<span class="t" style="left:224.40px;top:261.84px;font-size:12px;line-height:16px;color:#000;transform:scaleX(0.9049);">0.43126245288776</span>
<svg style="left:320px;top:268px;width:3px;height:5px;" viewBox="0 0 3 5" shape-rendering="crispEdges"><rect x="0" y="0" width="1" height="5" fill="#000"/><rect x="1" y="1" width="1" height="3" fill="#000"/><rect x="2" y="2" width="1" height="1" fill="#000"/></svg>
<span class="t" style="left:331.50px;top:261.84px;font-size:12px;line-height:16px;color:#000;transform:scaleX(0.8990);">8997</span>
<div style="left:184px;top:263px;width:13px;height:13px;border:1px solid #333;background:#fff;"></div>
<svg style="left:184px;top:263px;width:13px;height:13px;" viewBox="0 0 13 13"><path d="M2.3,6.3 L4.9,9.1 L10.5,3.5" stroke="#333" stroke-width="1.45" fill="none"/></svg>
<div class="hl" style="left:1px;top:299px;width:384px;"></div>
<span class="t" style="left:4.50px;top:281.84px;font-size:12px;line-height:16px;color:#000;transform:scaleX(0.9328);">14.0-15.0</span>
<span class="t" style="left:59.40px;top:281.84px;font-size:12px;line-height:16px;color:#000;transform:scaleX(0.9049);">0.42655858888201</span>
<svg style="left:155px;top:288px;width:3px;height:5px;" viewBox="0 0 3 5" shape-rendering="crispEdges"><rect x="0" y="0" width="1" height="5" fill="#000"/><rect x="1" y="1" width="1" height="3" fill="#000"/><rect x="2" y="2" width="1" height="1" fill="#000"/></svg>
<span class="t" style="left:224.40px;top:281.84px;font-size:12px;line-height:16px;color:#000;transform:scaleX(0.9049);">0.42655858888201</span>
<svg style="left:320px;top:288px;width:3px;height:5px;" viewBox="0 0 3 5" shape-rendering="crispEdges"><rect x="0" y="0" width="1" height="5" fill="#000"/><rect x="1" y="1" width="1" height="3" fill="#000"/><rect x="2" y="2" width="1" height="1" fill="#000"/></svg>
<span class="t" style="left:331.50px;top:281.84px;font-size:12px;line-height:16px;color:#000;transform:scaleX(0.8990);">8056</span>
<div style="left:184px;top:283px;width:13px;height:13px;border:1px solid #333;background:#fff;"></div>
<svg style="left:184px;top:283px;width:13px;height:13px;" viewBox="0 0 13 13"><path d="M2.3,6.3 L4.9,9.1 L10.5,3.5" stroke="#333" stroke-width="1.45" fill="none"/></svg>
<div class="hl" style="left:1px;top:319px;width:384px;"></div>
<span class="t" style="left:4.50px;top:301.84px;font-size:12px;line-height:16px;color:#000;transform:scaleX(0.9379);">15.0-16.</span>
<svg style="left:47px;top:308px;width:3px;height:5px;" viewBox="0 0 3 5" shape-rendering="crispEdges"><rect x="0" y="0" width="1" height="5" fill="#000"/><rect x="1" y="1" width="1" height="3" fill="#000"/><rect x="2" y="2" width="1" height="1" fill="#000"/></svg>
<span class="t" style="left:59.40px;top:301.84px;font-size:12px;line-height:16px;color:#000;transform:scaleX(0.9049);">0.42557861048255</span>
<svg style="left:155px;top:308px;width:3px;height:5px;" viewBox="0 0 3 5" shape-rendering="crispEdges"><rect x="0" y="0" width="1" height="5" fill="#000"/><rect x="1" y="1" width="1" height="3" fill="#000"/><rect x="2" y="2" width="1" height="1" fill="#000"/></svg>
<span class="t" style="left:224.40px;top:301.84px;font-size:12px;line-height:16px;color:#000;transform:scaleX(0.9049);">0.42557861048255</span>
<svg style="left:320px;top:308px;width:3px;height:5px;" viewBox="0 0 3 5" shape-rendering="crispEdges"><rect x="0" y="0" width="1" height="5" fill="#000"/><rect x="1" y="1" width="1" height="3" fill="#000"/><rect x="2" y="2" width="1" height="1" fill="#000"/></svg>
<span class="t" style="left:331.50px;top:301.84px;font-size:12px;line-height:16px;color:#000;transform:scaleX(0.8990);">7317</span>
<div style="left:184px;top:303px;width:13px;height:13px;border:1px solid #333;background:#fff;"></div>
<svg style="left:184px;top:303px;width:13px;height:13px;" viewBox="0 0 13 13"><path d="M2.3,6.3 L4.9,9.1 L10.5,3.5" stroke="#333" stroke-width="1.45" fill="none"/></svg>
<div class="hl" style="left:1px;top:339px;width:384px;"></div>
<span class="t" style="left:4.50px;top:321.84px;font-size:12px;line-height:16px;color:#000;transform:scaleX(0.9379);">16.0-17.</span>
<svg style="left:47px;top:328px;width:3px;height:5px;" viewBox="0 0 3 5" shape-rendering="crispEdges"><rect x="0" y="0" width="1" height="5" fill="#000"/><rect x="1" y="1" width="1" height="3" fill="#000"/><rect x="2" y="2" width="1" height="1" fill="#000"/></svg>
<span class="t" style="left:59.40px;top:321.84px;font-size:12px;line-height:16px;color:#000;transform:scaleX(0.9049);">0.41630763741438</span>
<svg style="left:155px;top:328px;width:3px;height:5px;" viewBox="0 0 3 5" shape-rendering="crispEdges"><rect x="0" y="0" width="1" height="5" fill="#000"/><rect x="1" y="1" width="1" height="3" fill="#000"/><rect x="2" y="2" width="1" height="1" fill="#000"/></svg>
<span class="t" style="left:224.40px;top:321.84px;font-size:12px;line-height:16px;color:#000;transform:scaleX(0.9049);">0.41630763741438</span>
<svg style="left:320px;top:328px;width:3px;height:5px;" viewBox="0 0 3 5" shape-rendering="crispEdges"><rect x="0" y="0" width="1" height="5" fill="#000"/><rect x="1" y="1" width="1" height="3" fill="#000"/><rect x="2" y="2" width="1" height="1" fill="#000"/></svg>
<span class="t" style="left:331.50px;top:321.84px;font-size:12px;line-height:16px;color:#000;transform:scaleX(0.8990);">6503</span>
<div style="left:184px;top:323px;width:13px;height:13px;border:1px solid #333;background:#fff;"></div>
<svg style="left:184px;top:323px;width:13px;height:13px;" viewBox="0 0 13 13"><path d="M2.3,6.3 L4.9,9.1 L10.5,3.5" stroke="#333" stroke-width="1.45" fill="none"/></svg>
<div class="hl" style="left:1px;top:359px;width:384px;"></div>
<span class="t" style="left:4.50px;top:341.84px;font-size:12px;line-height:16px;color:#000;transform:scaleX(0.9379);">17.0-18.</span>
<svg style="left:47px;top:348px;width:3px;height:5px;" viewBox="0 0 3 5" shape-rendering="crispEdges"><rect x="0" y="0" width="1" height="5" fill="#000"/><rect x="1" y="1" width="1" height="3" fill="#000"/><rect x="2" y="2" width="1" height="1" fill="#000"/></svg>
<span class="t" style="left:59.40px;top:341.84px;font-size:12px;line-height:16px;color:#000;transform:scaleX(0.9049);">0.41437789214789</span>
<svg style="left:155px;top:348px;width:3px;height:5px;" viewBox="0 0 3 5" shape-rendering="crispEdges"><rect x="0" y="0" width="1" height="5" fill="#000"/><rect x="1" y="1" width="1" height="3" fill="#000"/><rect x="2" y="2" width="1" height="1" fill="#000"/></svg>
<span class="t" style="left:224.40px;top:341.84px;font-size:12px;line-height:16px;color:#000;transform:scaleX(0.9049);">0.41437789214789</span>
<svg style="left:320px;top:348px;width:3px;height:5px;" viewBox="0 0 3 5" shape-rendering="crispEdges"><rect x="0" y="0" width="1" height="5" fill="#000"/><rect x="1" y="1" width="1" height="3" fill="#000"/><rect x="2" y="2" width="1" height="1" fill="#000"/></svg>
<span class="t" style="left:331.50px;top:341.84px;font-size:12px;line-height:16px;color:#000;transform:scaleX(0.8990);">5531</span>
<div style="left:184px;top:343px;width:13px;height:13px;border:1px solid #333;background:#fff;"></div>
<svg style="left:184px;top:343px;width:13px;height:13px;" viewBox="0 0 13 13"><path d="M2.3,6.3 L4.9,9.1 L10.5,3.5" stroke="#333" stroke-width="1.45" fill="none"/></svg>
<div style="left:0;top:279px;width:57px;height:21px;border:1px solid #000;background:#fff;"></div>
<span class="t" style="left:4.80px;top:281.84px;font-size:12px;line-height:16px;color:#000;transform:scaleX(0.9269);">14.0-15.0</span>
</div>
<div style="left:876px;top:158px;width:16px;height:377px;background:#f0f0f0;"></div>
<div style="left:876px;top:175px;width:15px;height:118px;background:#cdcdcd;"></div>
<svg style="left:876px;top:160px;width:16px;height:14px;" viewBox="0 0 16 14"><path d="M4.6,9.3 L7.5,6.1 L10.4,9.3" stroke="#555" stroke-width="2.1" fill="none"/></svg>
<svg style="left:876px;top:520px;width:16px;height:14px;" viewBox="0 0 16 14"><path d="M4.6,4.7 L7.5,7.9 L10.4,4.7" stroke="#555" stroke-width="2.1" fill="none"/></svg>
<div style="left:755px;top:562px;width:73px;height:21px;background:#e1e1e1;border:2px solid #0078d7;"></div>
<span class="t" style="left:783.30px;top:564.94px;font-size:12px;line-height:16px;color:#000;transform:scaleX(0.9228);">OK</span>
<div class="btn" style="left:837px;top:562px;width:73px;height:21px;"></div>
<span class="t" style="left:855.20px;top:564.94px;font-size:12px;line-height:16px;color:#000;transform:scaleX(0.9504);">Cancel</span>
</body></html>
